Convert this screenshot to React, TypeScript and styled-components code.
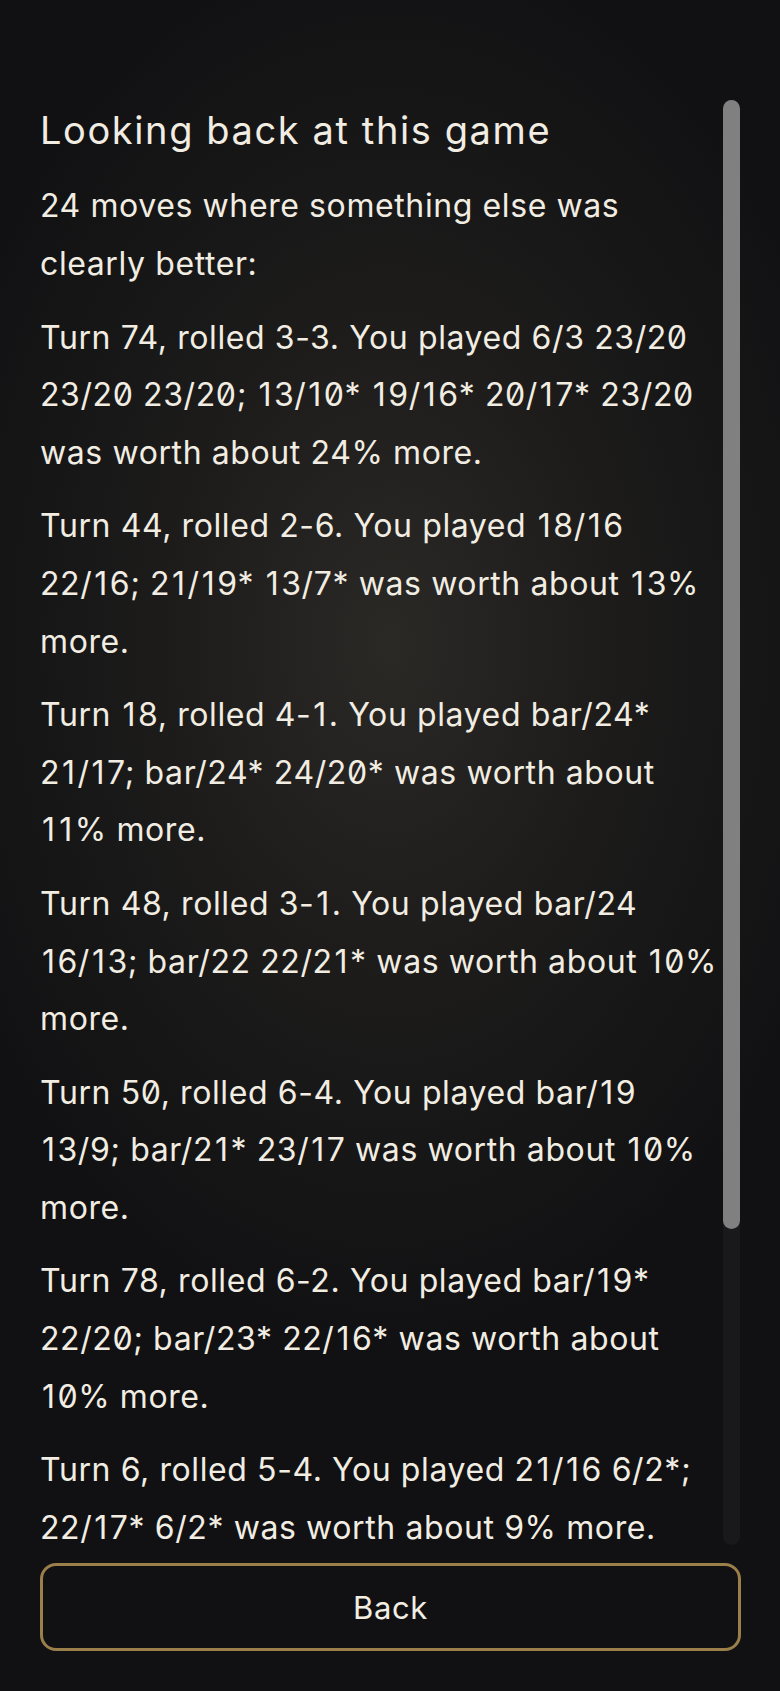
import React from "react";
import styled, { createGlobalStyle } from "styled-components";

const Global = createGlobalStyle`
  html, body {
    margin: 0;
    padding: 0;
    background: #111113;
  }
  body {
    font-family: Inter, "Noto Sans", sans-serif;
    color: #f2ede2;
  }
  * { box-sizing: border-box; }
`;

const Page = styled.div`
  width: 780px;
  height: 1691px;
  background: radial-gradient(ellipse 62% 42% at 50% 38%, #2b2926 0%, #1d1c1b 45%, #111113 100%);
  display: flex;
  flex-direction: column;
  padding: 100px 40px 40px 40px;
  gap: 18px;
`;

const ScrollArea = styled.div`
  height: 1445px;
  display: flex;
  flex-direction: row;
  flex-shrink: 0;
`;

const Viewport = styled.div`
  flex: 1;
  min-width: 0;
  overflow: hidden;
`;

const Track = styled.div`
  width: 17px;
  flex-shrink: 0;
  background: #19191b;
  border-radius: 9px;
  display: flex;
  flex-direction: column;
`;

const Thumb = styled.div<{ $ratio: number }>`
  height: ${(p) => p.$ratio * 100}%;
  background: #808080;
  border-radius: 9px;
`;

const Title = styled.h2`
  margin: 6px 0 22px 0;
  font-size: 38px;
  line-height: 1.3;
  font-weight: 400;
  letter-spacing: 1.6px;
  white-space: nowrap;
`;

const Para = styled.p`
  margin: 0 0 16px 0;
  font-size: 32px;
  line-height: 1.8;
  font-weight: 400;
  letter-spacing: 0.6px;
  font-feature-settings: "zero" 1, "calt" 0;
`;

/* the figure one sits in a wider box than Inter's proportional one */
const One = styled.span`
  padding: 0 1.9px;
`;

const BackButton = styled.button`
  height: 88px;
  width: 701px;
  flex-shrink: 0;
  background: #111113;
  border: 3px solid #9b7f4a;
  border-radius: 16px;
  color: #f2ede2;
  font-family: Inter, "Noto Sans", sans-serif;
  font-size: 31px;
  font-weight: 400;
  letter-spacing: 0.6px;
  cursor: pointer;
`;

const moves = [
  "Turn 74, rolled 3-3. You played 6/3 23/20 23/20 23/20; 13/10* 19/16* 20/17* 23/20 was worth about 24% more.",
  "Turn 44, rolled 2-6. You played 18/16 22/16; 21/19* 13/7* was worth about 13% more.",
  "Turn 18, rolled 4-1. You played bar/24* 21/17; bar/24* 24/20* was worth about 11% more.",
  "Turn 48, rolled 3-1. You played bar/24 16/13; bar/22 22/21* was worth about 10% more.",
  "Turn 50, rolled 6-4. You played bar/19 13/9; bar/21* 23/17 was worth about 10% more.",
  "Turn 78, rolled 6-2. You played bar/19* 22/20; bar/23* 22/16* was worth about 10% more.",
  "Turn 6, rolled 5-4. You played 21/16 6/2*; 22/17* 6/2* was worth about 9% more.",
  "Turn 32, rolled 5-2. You played 13/8 6/4; 13/11 13/8 was worth about 8% more.",
  "Turn 60, rolled 4-3. You played 8/4 6/3; 13/9 13/10 was worth about 7% more.",
];

function withOnes(text: string) {
  const parts = text.split("1");
  const out: React.ReactNode[] = [];
  parts.forEach((p, i) => {
    if (i > 0) out.push(<One key={`o${i}`}>1</One>);
    if (p) out.push(p);
  });
  return out;
}

export default function App() {
  return (
    <>
      <Global />
      <Page>
        <ScrollArea>
          <Viewport>
            <Title>Looking back at this game</Title>
            <Para>{withOnes("24 moves where something else was clearly better:")}</Para>
            {moves.map((m) => (
              <Para key={m}>{withOnes(m)}</Para>
            ))}
          </Viewport>
          <Track>
            <Thumb $ratio={0.781} />
          </Track>
        </ScrollArea>
        <BackButton>Back</BackButton>
      </Page>
    </>
  );
}
